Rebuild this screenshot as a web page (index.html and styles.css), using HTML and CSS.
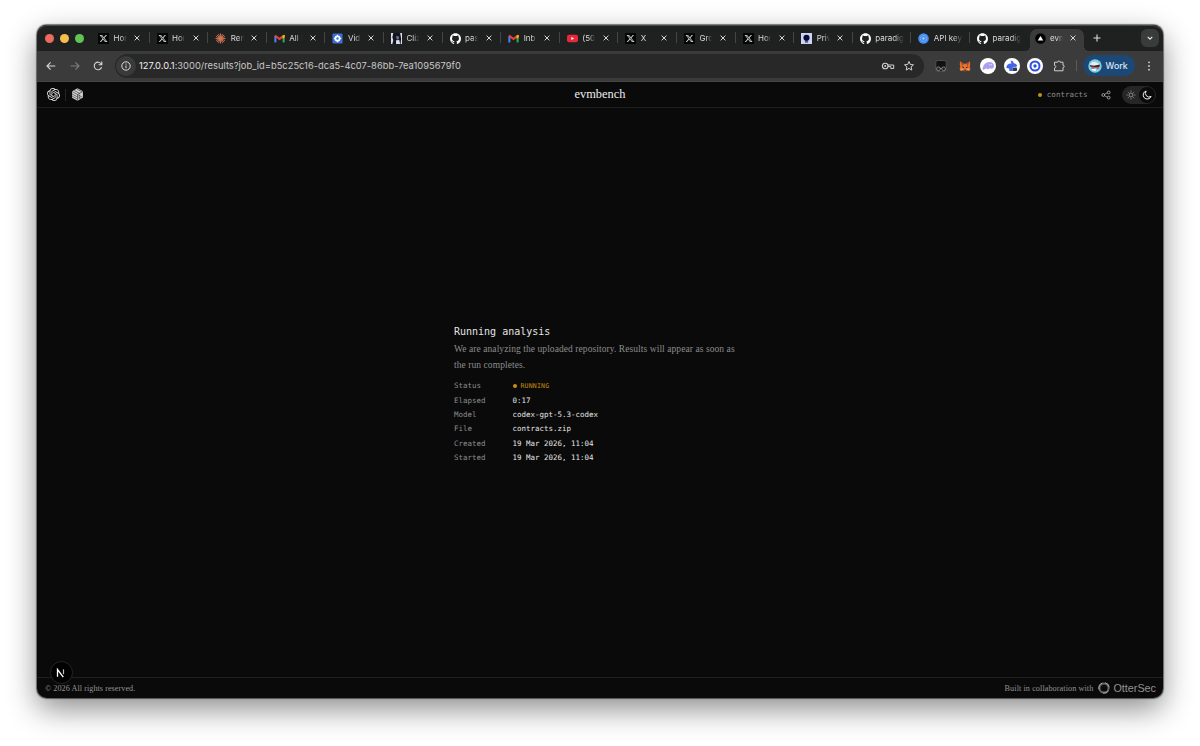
FILE: index.html
```html
<!DOCTYPE html>

<html lang="en">
    <head>
        <meta charset="utf-8">
        <title>evmbench</title>
        <link rel="stylesheet" href="styles.css">
    </head>

    <body>

        <!-- shared icons -->
        <svg class="sprite" aria-hidden="true">
            <symbol id="x-logo" viewBox="0 0 24 24">
                <rect width="24" height="24" fill="#050505"/>
                <path transform="translate(3.400 3.400) scale(.72)" fill="#d8d8d8" d="M18.901 1.153h3.68l-8.04 9.19L24 22.846h-7.406l-5.8-7.584-6.638 7.584H.474l8.6-9.83L0 1.154h7.594l5.243 6.932ZM17.61 20.644h2.039L6.486 3.24H4.298Z"/>
            </symbol>
            <symbol id="github" viewBox="0 0 24 24">
                <path fill="#fff" d="M12 0.500C5.400 0.500 0 5.900 0 12.500c0 5.300 3.400 9.800 8.200 11.400.6.1.8-.3.8-.6v-2.200c-3.300.7-4-1.400-4-1.400-.6-1.400-1.400-1.800-1.400-1.800-1.100-.7.1-.7.1-.7 1.200.1 1.900 1.200 1.900 1.200 1.100 1.800 2.800 1.300 3.500 1 .1-.8.4-1.300.8-1.600-2.700-.3-5.500-1.300-5.500-5.900 0-1.300.5-2.400 1.200-3.200-.1-.3-.5-1.500.1-3.200 0 0 1-.3 3.300 1.200a11.500 11.500 0 0 1 6 0c2.300-1.500 3.300-1.200 3.300-1.200.7 1.700.2 2.900.1 3.200.8.8 1.200 1.900 1.200 3.200 0 4.600-2.800 5.600-5.500 5.900.4.4.8 1.100.8 2.200v3.300c0 .3.200.7.800.6A12 12 0 0 0 24 12.500C24 5.900 18.600.5 12 .5z"/>
            </symbol>
            <symbol id="gmail" viewBox="0 0 24 24">
                <path d="M3 20.500V6" stroke="#4285f4" stroke-width="4.500"/>
                <path d="M21 20.500V6" stroke="#34a853" stroke-width="4.500"/>
                <path d="M2.500 5.800L12 13l9.500-7.200" fill="none" stroke="#ea4335" stroke-width="4.500"/>
                <path d="M18.800 5.500l4.700-1.500v5.500l-4.700 3z" fill="#fbbc04"/>
            </symbol>
            <symbol id="close" viewBox="0 0 8 8">
                <path d="M1.600 1.600l4.800 4.800M6.400 1.600l-4.800 4.800" stroke="#d5d7d6" stroke-width="1"/>
            </symbol>
        </svg>

        <div class="window">

            <div class="tab-strip">
                <div class="lights">
                    <span class="light red"></span>
                    <span class="light yellow"></span>
                    <span class="light green"></span>
                </div>

                <div class="tabs">
                    <div class="tab"><svg class="favicon"><use href="#x-logo"/></svg><span class="label">Hom</span><svg class="close"><use href="#close"/></svg></div>
                    <div class="tab"><svg class="favicon"><use href="#x-logo"/></svg><span class="label">Hom</span><svg class="close"><use href="#close"/></svg></div>
                    <div class="tab">
                        <svg class="favicon" viewBox="0 0 24 24"><path d="M12 1v22M1 12h22M4.200 4.200l15.600 15.600M19.800 4.200L4.200 19.800M7.500 2l9 20M16.500 2l-9 20M2 7.500l20 9M2 16.500l20-9" stroke="#d97757" stroke-width="1.900"/></svg>
                        <span class="label">Rem</span><svg class="close"><use href="#close"/></svg>
                    </div>
                    <div class="tab"><svg class="favicon"><use href="#gmail"/></svg><span class="label">All M</span><svg class="close"><use href="#close"/></svg></div>
                    <div class="tab">
                        <svg class="favicon" viewBox="0 0 24 24"><rect x="1" y="1" width="22" height="22" rx="3" fill="#3b6fd8"/><circle cx="12" cy="12" r="4.700" fill="none" stroke="#fff" stroke-width="4"/><path d="M12 4v3M12 17v3M4 12h3M17 12h3" stroke="#fff" stroke-width="2.500"/></svg>
                        <span class="label">Vid</span><svg class="close"><use href="#close"/></svg>
                    </div>
                    <div class="tab">
                        <svg class="favicon" viewBox="0 0 24 24"><rect width="24" height="24" fill="#12141f"/><path d="M0 0h5l-2 9 2 7-2 8H0zM20 0h4v24h-3l1-12zM11 16l7-1 2 9h-9z" fill="#d9deea"/><path d="M11 6l7 2-2 7-4-2z" fill="#6c7590"/></svg>
                        <span class="label">Cliz</span><svg class="close"><use href="#close"/></svg>
                    </div>
                    <div class="tab"><svg class="favicon"><use href="#github"/></svg><span class="label">pas</span><svg class="close"><use href="#close"/></svg></div>
                    <div class="tab"><svg class="favicon"><use href="#gmail"/></svg><span class="label">Inb</span><svg class="close"><use href="#close"/></svg></div>
                    <div class="tab">
                        <svg class="favicon" viewBox="0 0 24 24"><rect y="4" width="24" height="16" rx="4" fill="#e8283c"/><path d="M9.500 8.500v7l6-3.500z" fill="#fff"/></svg>
                        <span class="label">(50</span><svg class="close"><use href="#close"/></svg>
                    </div>
                    <div class="tab"><svg class="favicon"><use href="#x-logo"/></svg><span class="label">X</span><svg class="close"><use href="#close"/></svg></div>
                    <div class="tab"><svg class="favicon"><use href="#x-logo"/></svg><span class="label">Gro</span><svg class="close"><use href="#close"/></svg></div>
                    <div class="tab"><svg class="favicon"><use href="#x-logo"/></svg><span class="label">Hom</span><svg class="close"><use href="#close"/></svg></div>
                    <div class="tab">
                        <svg class="favicon" viewBox="0 0 24 24"><rect width="24" height="24" fill="#cdd2fa"/><circle cx="12" cy="10.500" r="6.700" fill="#090b2c"/><path d="M8.500 19.500h7" stroke="#090b2c" stroke-width="2.200"/></svg>
                        <span class="label">Priv</span><svg class="close"><use href="#close"/></svg>
                    </div>
                    <div class="tab"><svg class="favicon"><use href="#github"/></svg><span class="label wide">paradig</span></div>
                    <div class="tab">
                        <svg class="favicon" viewBox="0 0 24 24"><circle cx="12" cy="12" r="11.500" fill="#438cf0"/><circle cx="12" cy="12" r="6.500" fill="none" stroke="#8fbefb" stroke-width="2" stroke-dasharray="3 1"/><circle cx="12" cy="12" r="2.500" fill="#a9cdfc"/></svg>
                        <span class="label wide">API key</span>
                    </div>
                    <div class="tab last"><svg class="favicon"><use href="#github"/></svg><span class="label wide">paradig</span></div>
                    <div class="tab active">
                        <svg class="favicon" viewBox="0 0 24 24"><circle cx="12" cy="12" r="11.500" fill="#000"/><path d="M12 6.500l6 10H6z" fill="#fff"/></svg>
                        <span class="label">evm</span><svg class="close"><use href="#close"/></svg>
                    </div>
                </div>

                <svg class="new-tab" viewBox="0 0 10 10"><path d="M5 1.500v7M1.500 5h7" stroke="#dedede" stroke-width="1.100"/></svg>
                <div class="tab-search">
                    <svg viewBox="0 0 8 8"><path d="M1.700 2.800L4 5.100l2.300-2.300" fill="none" stroke="#e4e4e4" stroke-width="1.200"/></svg>
                </div>
            </div>

            <div class="toolbar">
                <div class="nav">
                    <svg viewBox="0 0 12 12"><path d="M10.300 6H2M5.600 2.400L2 6l3.600 3.600" fill="none" stroke="#d6d6d6" stroke-width="1.100"/></svg>
                    <svg viewBox="0 0 12 12"><path d="M1.700 6H10M6.400 2.400L10 6 6.400 9.600" fill="none" stroke="#7f7f7f" stroke-width="1.100"/></svg>
                    <svg viewBox="0 0 12 12"><path d="M9.600 7.300A3.800 3.800 0 1 1 9.300 4M9.800 1.500v3.200H6.600" fill="none" stroke="#d6d6d6" stroke-width="1.100"/></svg>
                </div>

                <div class="address">
                    <span class="site-info">
                        <svg viewBox="0 0 12 12"><circle cx="6" cy="6" r="4.200" fill="none" stroke="#dcdcdc" stroke-width="1"/><path d="M6 5.500v2.700M6 3.600v1" stroke="#dcdcdc" stroke-width="1"/></svg>
                    </span>
                    <span class="url">127.0.0.1<span class="path">:3000/results?job_id=b5c25c16-dca5-4c07-86bb-7ea1095679f0</span></span>
                    <svg class="key" viewBox="0 0 14 10"><circle cx="4.200" cy="5" r="2.800" fill="none" stroke="#d0d0d0" stroke-width="1.100"/><circle cx="4.200" cy="5" r="1" fill="#d0d0d0"/><path d="M7 4h5.700v3.500H9.800V5.600H7" fill="none" stroke="#d0d0d0" stroke-width="1"/></svg>
                    <svg class="star" viewBox="0 0 12 12"><path d="M6 1.500l1.300 3 3.200.3-2.400 2.100.7 3.200L6 8.400l-2.800 1.700.7-3.200L1.500 4.800l3.200-.3z" fill="none" stroke="#d0d0d0" stroke-width="1"/></svg>
                </div>

                <div class="extensions">
                    <svg viewBox="0 0 16 16"><rect x="2.800" y="2.500" width="10.400" height="11" rx="2" fill="#111" stroke="#666" stroke-width=".6"/><circle cx="5.400" cy="10.800" r="1.900" fill="#222" stroke="#aaa" stroke-width=".7"/><circle cx="10.600" cy="10.800" r="1.900" fill="#222" stroke="#aaa" stroke-width=".7"/><path d="M7.200 10.500h1.600" stroke="#aaa" stroke-width=".7"/></svg>
                    <svg viewBox="0 0 16 16"><path d="M3 3.200l3.800 2.500h2.400L13 3.200l.2 3.500-.5 2 .7 2-1 2.200-2.400-.6-1.200 1H7.200l-1.200-1-2.400.6-1-2.200.7-2-.5-2z" fill="#e8722f"/><path d="M3 3.200l3.800 2.500L5.500 8zM13 3.200L9.200 5.700 10.500 8z" fill="#b14a22"/><path d="M3.500 10.800l2.500-.3.500 1.500-2.800.5zM12.500 10.800l-2.500-.3-.5 1.500 2.800.5z" fill="#f39a57"/><path d="M5.300 9l1.700.8M10.700 9l-1.700.8M7 12.200h2" stroke="#3d2419"/></svg>
                    <svg viewBox="0 0 16 16"><circle cx="8" cy="8" r="8" fill="#fff"/><path d="M2.500 11.500C3 7 5.500 4 9.500 4c3 0 4.500 2 4.500 4 0 1.500-1 2.800-2.500 2.800-.8 0-1-.5-1.500-.5-1 0-1 1-2.200 1-.8 0-.8-.7-1.500-.7-1.300 0-2 1.800-3.800.9z" fill="#aaa0f0"/><path d="M9.800 6v1.300M11.500 6v1.300" stroke="#fff" stroke-width=".6"/></svg>
                    <svg viewBox="0 0 16 16"><circle cx="8" cy="8" r="8" fill="#fff"/><path d="M6.500 2.500l2.500.8.800 2c1.700.2 3.200 1.200 3.400 3l-2.200.7-1.500-.3-1 1.300.5 3H5.500l-.5-2.500-2.500-.5c-.3-2.500 1.500-4.500 5-4.500z" fill="#4164e8"/><rect x="8.800" y="9.500" width="4.200" height="3.500" rx=".8" fill="#343845"/></svg>
                    <svg viewBox="0 0 16 16"><circle cx="8" cy="8" r="8" fill="#fff"/><circle cx="8" cy="8" r="4.500" fill="none" stroke="#304fe0" stroke-width="2"/><circle cx="8" cy="8" r="1.700" fill="#304fe0"/></svg>
                    <svg viewBox="0 0 16 16"><path d="M3.500 4.200h3.200c0-1.700 2.400-1.700 2.400 0H12v3c1.700 0 1.700 2.300 0 2.300v3.300H3.500v-2.800c1.800-.2 1.800-2.400 0-2.600z" fill="none" stroke="#d0d0d0" stroke-width="1"/></svg>
                </div>

                <span class="divider"></span>
                <div class="profile">
                    <svg viewBox="0 0 14 14"><circle cx="7" cy="7" r="6.700" fill="#7bd0e8"/><path d="M2 6c1-3 3-3.500 5.500-3l4 2-.5 2-8 1z" fill="#eeeaea"/><path d="M1.800 6l4 .8L12 5.500l-.5 2.300-4 .7-5-.7z" fill="#2c2630"/><path d="M3.500 7.500l3 .5-.5 2-2.500-.5zM8 8.300l3.300-.5-.3 1.700-2.500.8z" fill="#d9545a"/><path d="M3.500 10l5 .3-1 1.700-3-.4z" fill="#fff"/></svg>
                    <span>Work</span>
                </div>
                <svg class="menu" viewBox="0 0 4 12"><circle cx="2" cy="2.300" r=".9"/><circle cx="2" cy="6" r=".9"/><circle cx="2" cy="9.700" r=".9"/></svg>
            </div>

            <header class="app-header">
                <div class="logos">
                    <svg viewBox="0 0 24 24"><path fill="#e6e6e6" d="M22.282 9.821a5.985 5.985 0 0 0-.516-4.911 6.046 6.046 0 0 0-6.51-2.9A6.065 6.065 0 0 0 4.981 4.182a5.985 5.985 0 0 0-3.998 2.9 6.046 6.046 0 0 0 .743 7.097 5.98 5.98 0 0 0 .511 4.911 6.051 6.051 0 0 0 6.515 2.900A5.985 5.985 0 0 0 13.260 24a6.056 6.056 0 0 0 5.772-4.206 5.990 5.990 0 0 0 3.998-2.900 6.056 6.056 0 0 0-.748-7.073zM13.260 22.429a4.476 4.476 0 0 1-2.876-1.041l.142-.080 4.778-2.758a.795.795 0 0 0 .393-.681v-6.737l2.020 1.169a.071.071 0 0 1 .038.052v5.583a4.504 4.504 0 0 1-4.495 4.494zM3.599 18.304a4.471 4.471 0 0 1-.535-3.014l.142.085 4.783 2.758a.771.771 0 0 0 .781 0l5.843-3.369v2.332a.080.080 0 0 1-.033.062L9.740 19.950a4.499 4.499 0 0 1-6.141-1.646zM2.341 7.896a4.485 4.485 0 0 1 2.366-1.973V11.600a.766.766 0 0 0 .388.677l5.814 3.354-2.020 1.169a.076.076 0 0 1-.071 0l-4.830-2.787A4.504 4.504 0 0 1 2.341 7.872zM18.937 11.751L13.104 8.364 15.119 7.200a.076.076 0 0 1 .071 0l4.830 2.791a4.494 4.494 0 0 1-.677 8.104v-5.677a.790.790 0 0 0-.407-.667zM20.948 8.728l-.142-.085-4.774-2.782a.776.776 0 0 0-.785 0L9.409 9.230V6.897a.066.066 0 0 1 .028-.062l4.830-2.787a4.499 4.499 0 0 1 6.680 4.660zM8.307 12.863l-2.020-1.164a.080.080 0 0 1-.038-.057V6.074a4.499 4.499 0 0 1 7.376-3.454l-.142.081L8.704 5.459a.795.795 0 0 0-.393.681zM9.404 10.498l2.602-1.500 2.607 1.500v2.999l-2.597 1.500-2.607-1.500Z"/></svg>
                    <span class="logo-divider"></span>
                    <svg viewBox="0 0 24 24"><path d="M12 .5l10 5.700v11.600L12 23.500 2 17.800V6.200z" fill="#d4d4d4"/><path d="M2 6.500l10 5.500v11M12 12L22 6.500M6 4.500l11 6M11 2l9 5M2 11l9 5M2 15l9 5M14 13l7 4M14 17l6 3M15 12v9" fill="none" stroke="#222" stroke-width="1.100"/></svg>
                </div>
                <div class="brand">evmbench</div>
                <div class="actions">
                    <span class="dot"></span>
                    <span class="job-name">contracts</span>
                    <svg class="share" viewBox="0 0 10 10"><path d="M3.500 4.300L6.500 2.800M3.500 5.700l3 1.500" stroke="#aaa" stroke-width=".8"/><g fill="none" stroke="#aaa" stroke-width=".9"><circle cx="2.300" cy="5" r="1.400"/><circle cx="7.700" cy="2.400" r="1.400"/><circle cx="7.700" cy="7.600" r="1.400"/></g></svg>
                    <div class="theme">
                        <svg viewBox="0 0 16 16"><g fill="none" stroke="#999" stroke-width=".9"><circle cx="8" cy="8" r="2"/><path d="M8 3.500v1.200M8 11.300v1.200M3.500 8h1.200M11.300 8h1.200M4.800 4.800l.9.9M10.300 10.300l.9.9M4.800 11.200l.9-.9M10.300 5.700l.9-.9"/></g></svg>
                        <svg class="on" viewBox="0 0 16 16"><path d="M7.200 4a4.100 4.100 0 1 0 4.900 5.400A3.700 3.700 0 0 1 7.200 4z" fill="none" stroke="#eee" stroke-width="1"/></svg>
                    </div>
                </div>
            </header>

            <main class="content">
                <div class="job">
                    <h1>Running analysis</h1>
                    <p>We are analyzing the uploaded repository. Results will appear as soon as<br>the run completes.</p>
                    <dl>
                        <dt>Status</dt><dd class="running"><span class="dot"></span>RUNNING</dd>
                        <dt>Elapsed</dt><dd>0:17</dd>
                        <dt>Model</dt><dd>codex-gpt-5.3-codex</dd>
                        <dt>File</dt><dd>contracts.zip</dd>
                        <dt>Created</dt><dd>19 Mar 2026, 11:04</dd>
                        <dt>Started</dt><dd>19 Mar 2026, 11:04</dd>
                    </dl>
                </div>
            </main>

            <footer class="app-footer">
                <span class="copyright">© 2026 All rights reserved.</span>
                <span class="built">Built in collaboration with</span>
                <svg viewBox="0 0 14 14"><circle cx="7" cy="7" r="4.600" fill="none" stroke="#666" stroke-width="2"/><path d="M2 8.500A5.200 5.200 0 0 1 5.500 2M8 1.800a5.200 5.200 0 0 1 4.200 4.400M11.500 9.800a5.200 5.200 0 0 1-5.500 2.300" fill="none" stroke="#aaa" stroke-width="1"/></svg>
                <span class="ottersec">OtterSec</span>
            </footer>

            <div class="dev-badge">
                <svg viewBox="0 0 12 12"><path d="M2.500 9.700V2.500l5.800 7.600" fill="none" stroke="#fff" stroke-width="1.300"/><path d="M8.500 2.300v4.900" stroke="#bbb" stroke-width="1.200"/></svg>
            </div>
        </div>

    </body>
</html>
```

FILE: styles.css
```css
* { box-sizing: border-box; }
body
{
    margin: 0; padding: 25px 37px 0; height: 746px; overflow: hidden;
    background: #fff; font-family: Inter, "Liberation Sans", sans-serif;
}
svg { display: block; flex: none; }
.sprite { position: absolute; width: 0; height: 0; }
.window
{
    position: relative; display: flex; flex-direction: column;
    width: 1126px; height: 672.500px;
    border-radius: 10px; background: #0a0a0a;
    box-shadow: 0 0 1px 0.5px rgba(0, 0, 0, 0.5), 0 11px 30px rgba(0, 0, 0, 0.45);
}

/* tabs */
.tab-strip
{
    display: flex; align-items: center; flex: none; height: 26px;
    background: #1f2120; border-radius: 10px 10px 0 0; box-shadow: inset 0 1px 0 #484a49;
}
.lights { display: flex; gap: 6px; width: 54px; padding-left: 8px; flex: none; }
.light { width: 9px; height: 9px; border-radius: 50%; }
.red { background: #ed6a5f; }
.yellow { background: #f5bf4f; }
.green { background: #61c554; }
.tabs { display: flex; align-self: stretch; }
.tab
{
    display: flex; align-items: center; width: 58.600px; height: 26px;
    padding-left: 7px; position: relative;
}
.tab::after
{
    content: ""; position: absolute; right: 0; top: 7px;
    width: 1px; height: 11px; background: #444645;
}
.tab.last::after { display: none; }
.favicon { width: 11px; height: 11px; margin-right: 4.500px; }
.label
{
    width: 13px; overflow: hidden; white-space: nowrap; font-size: 8px; color: #d8dad9;
    -webkit-mask-image: linear-gradient(90deg, #000 55%, transparent);
    mask-image: linear-gradient(90deg, #000 55%, transparent);
}
.label.wide
{
    width: 29px;
    -webkit-mask-image: linear-gradient(90deg, #000 65%, transparent);
    mask-image: linear-gradient(90deg, #000 65%, transparent);
}
.close { width: 8px; height: 8px; margin-left: 6.500px; }
.tab.active
{
    height: 22px; margin: 4px 0 0 1px; width: 54px; padding-bottom: 4px; padding-left: 5px;
    background: #3b3b3b; border-radius: 7px 7px 0 0;
}
/* flared feet of the active tab */
.tab.active::before, .tab.active::after
{
    content: ""; display: block; position: absolute; top: auto; bottom: 0;
    width: 5px; height: 5px;
}
.tab.active::before { left: -5px; background: radial-gradient(circle at 0 0, transparent 5px, #3b3b3b 5px); }
.tab.active::after { right: -5px; background: radial-gradient(circle at 100% 0, transparent 5px, #3b3b3b 5px); }
.tab.active .close { margin-left: 6px; }
.new-tab { width: 10px; height: 10px; margin-left: 8px; }
.tab-search
{
    display: flex; align-items: center; justify-content: center;
    width: 18px; height: 18px; margin: 0 4px 0 auto; border-radius: 6px; background: #3a3c3b;
}
.tab-search svg { width: 8px; height: 8px; }

/* toolbar */
.toolbar
{
    display: flex; align-items: center; flex: none; height: 31px; padding-bottom: 1px;
    background: #3b3b3b; border-bottom: 1px solid #444;
}
.nav { display: flex; gap: 11.500px; width: 78px; padding-left: 8px; }
.nav svg { width: 12px; height: 12px; }
.address
{
    display: flex; align-items: center; width: 809px; height: 24px; padding-left: 1px;
    border-radius: 12px; background: #282828;
}
.site-info
{
    display: flex; align-items: center; justify-content: center;
    width: 20px; height: 20px; border-radius: 50%; background: #3a3a3a;
}
.site-info svg { width: 12px; height: 12px; }
.url { margin-left: 3px; font-size: 9.300px; letter-spacing: 0.030px; color: #eee; white-space: nowrap; }
.path { color: #c8c8c8; }
.key { width: 14px; height: 10px; margin-left: auto; }
.star { width: 12px; height: 12px; margin: 0 9.500px 0 8px; }
.extensions { display: flex; gap: 7.500px; margin-left: 9px; }
.extensions svg { width: 16px; height: 16px; }
.divider { width: 1px; height: 11px; margin-left: 9px; background: #5b5b5b; }
.profile
{
    display: flex; align-items: center; gap: 4px; width: 52px; height: 21px;
    margin-left: 6px; padding-left: 5px; border-radius: 11px;
    background: #1c4875; color: #d7e6fa; font-size: 8.800px; font-weight: 500;
}
.profile svg { width: 14px; height: 14px; }
.menu { width: 4px; height: 12px; margin: 0 12px 0 auto; fill: #d6d6d6; }

/* app */
.app-header
{
    display: grid; grid-template-columns: 1fr auto 1fr; align-items: center;
    flex: none; height: 26px; border-bottom: 1px solid #1f1f1f;
}
.logos { display: flex; align-items: center; padding-left: 10px; }
.logos svg { width: 13px; height: 13px; }
.logo-divider { width: 1px; height: 12px; margin: 0 5px; background: #252525; }
.brand { font-family: "Liberation Serif", serif; font-size: 12.400px; color: #ededed; }
.actions { display: flex; align-items: center; justify-content: flex-end; padding-right: 7.500px; }
.dot { width: 4px; height: 4px; border-radius: 50%; background: #ca8f10; }
.job-name
{
    margin-left: 5px; font-family: "DejaVu Sans Mono", monospace;
    font-size: 7.500px; color: #8c8c8c;
}
.share { width: 10px; height: 10px; margin-left: 13px; }
.theme
{
    display: flex; align-items: center; margin-left: 11px; padding: 1px;
    width: 34px; height: 18px; border-radius: 9px; background: #262626;
}
.theme svg { width: 16px; height: 16px; border-radius: 50%; }
.theme .on { background: #0a0a0a; }

.content { flex: 1; padding: 216.500px 0 0 417px; }
.job { width: 300px; font-family: "DejaVu Sans Mono", monospace; }
.job h1 { margin: 0; font-size: 10px; font-weight: 400; line-height: 14px; color: #e6e6e6; }
.job p
{
    margin: 3.500px 0 5.500px; font-family: "Liberation Serif", serif;
    font-size: 9.500px; line-height: 15.500px; letter-spacing: 0.070px;
    color: #8c8c8c; white-space: nowrap;
}
.job dl
{
    display: grid; grid-template-columns: 58.500px auto; grid-auto-rows: 14.350px;
    align-items: center; margin: 0; font-size: 7.480px;
}
.job dt { color: #8c8c8c; }
.job dd { margin: 0; color: #e6e6e6; }
.job .running { display: flex; align-items: center; gap: 4px; font-size: 6.500px; letter-spacing: 0.200px; color: #ca8f10; }

.app-footer
{
    display: flex; align-items: center; flex: none; height: 21px; padding: 1px 7px 0 8px;
    border-top: 1px solid #1f1f1f; font-family: "Liberation Serif", serif;
    font-size: 8.200px; letter-spacing: 0.040px; color: #929292;
}
.copyright { flex: 1; }
.built { letter-spacing: 0.080px; }
.app-footer svg { width: 14px; height: 14px; margin: 0 2px 0 4px; }
.ottersec { font-family: "Liberation Sans", sans-serif; font-size: 10.800px; letter-spacing: 0; }
.dev-badge
{
    position: absolute; left: 12.500px; top: 636px; width: 23px; height: 23px;
    display: flex; align-items: center; justify-content: center;
    border-radius: 50%; background: #000; border: 1px solid #252525;
}
.dev-badge svg { width: 12px; height: 12px; }
```
